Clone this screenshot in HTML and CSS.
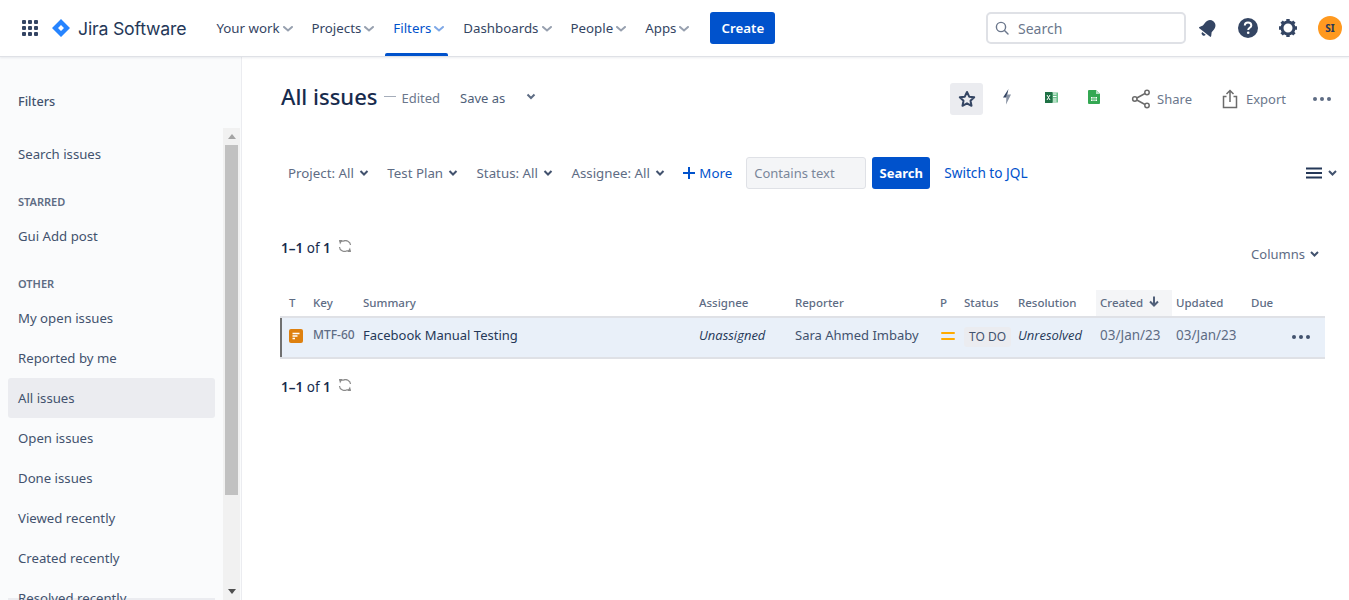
FILE: index.html
```html
<!DOCTYPE html>
<html lang="en">
<head>
<meta charset="utf-8">
<title>All issues</title>
<link rel="stylesheet" href="styles.css">
</head>
<body>
<header class="topbar">
  <svg class="apps" width="16" height="16" viewBox="0 0 16 16"><g fill="#344563"><rect x="0" y="0" width="4" height="4" rx="1"/><rect x="6" y="0" width="4" height="4" rx="1"/><rect x="12" y="0" width="4" height="4" rx="1"/><rect x="0" y="6" width="4" height="4" rx="1"/><rect x="6" y="6" width="4" height="4" rx="1"/><rect x="12" y="6" width="4" height="4" rx="1"/><rect x="0" y="12" width="4" height="4" rx="1"/><rect x="6" y="12" width="4" height="4" rx="1"/><rect x="12" y="12" width="4" height="4" rx="1"/></g></svg>
  <a class="logo">
    <svg width="18" height="18" viewBox="0 0 18 18"><path fill="#2684ff" fill-rule="evenodd" d="M9 0l9 9-9 9-9-9zM9 6L6 9l3 3 3-3z"/></svg>
    <span class="logo-text">Jira Software</span>
  </a>
  <nav class="nav">
    <a class="nav-item">Your work<svg class="nav-chev" width="10" height="6" viewBox="0 0 10 6"><path d="M1 1l4 3.500L9 1" fill="none" stroke="#97a0af" stroke-width="2" stroke-linecap="round"/></svg></a>
    <a class="nav-item">Projects<svg class="nav-chev" width="10" height="6" viewBox="0 0 10 6"><path d="M1 1l4 3.500L9 1" fill="none" stroke="#97a0af" stroke-width="2" stroke-linecap="round"/></svg></a>
    <a class="nav-item nav-active">Filters<svg class="nav-chev" width="10" height="6" viewBox="0 0 10 6"><path d="M1 1l4 3.500L9 1" fill="none" stroke="#7fa8e6" stroke-width="2" stroke-linecap="round"/></svg></a>
    <a class="nav-item">Dashboards<svg class="nav-chev" width="10" height="6" viewBox="0 0 10 6"><path d="M1 1l4 3.500L9 1" fill="none" stroke="#97a0af" stroke-width="2" stroke-linecap="round"/></svg></a>
    <a class="nav-item">People<svg class="nav-chev" width="10" height="6" viewBox="0 0 10 6"><path d="M1 1l4 3.500L9 1" fill="none" stroke="#97a0af" stroke-width="2" stroke-linecap="round"/></svg></a>
    <a class="nav-item">Apps<svg class="nav-chev" width="10" height="6" viewBox="0 0 10 6"><path d="M1 1l4 3.500L9 1" fill="none" stroke="#97a0af" stroke-width="2" stroke-linecap="round"/></svg></a>
  </nav>
  <button class="create">Create</button>
  <div class="top-right">
    <div class="global-search">
      <svg width="14" height="14" viewBox="0 0 14 14"><circle cx="6" cy="6" r="4.600" fill="none" stroke="#6b778c" stroke-width="1.400"/><path d="M9.500 9.500l3.500 3.500" stroke="#6b778c" stroke-width="1.400" stroke-linecap="round"/></svg>
      <span>Search</span>
    </div>
    <svg class="tb-bell" width="18" height="18" viewBox="0 0 18 18"><g fill="#344563" transform="rotate(38 9 9) translate(-1.300 -1.300) scale(1.150)"><path d="M9 1.500c-3 0-4.800 2.300-4.800 5.200v3.300L2.500 12.800v1h13v-1l-1.700-2.800V6.700C13.800 3.800 12 1.500 9 1.500z"/><path d="M7 14.800h4a2 2 0 0 1-4 0z"/></g></svg>
    <svg class="tb-help" width="22" height="22" viewBox="0 0 22 22"><circle cx="11" cy="11" r="10" fill="#344563"/><path d="M7.800 8.600c0-1.900 1.400-3 3.200-3 1.900 0 3.300 1.100 3.300 2.800 0 2.400-3.100 2.400-3.100 4.600" fill="none" stroke="#fff" stroke-width="2"/><circle cx="11.200" cy="15.800" r="1.300" fill="#fff"/></svg>
    <svg class="tb-gear" width="20" height="20" viewBox="0 0 20 20"><circle cx="10" cy="10" r="6" fill="none" stroke="#344563" stroke-width="3"/><g stroke="#344563" stroke-width="3.400"><path d="M10 1v3M10 16v3M1 10h3M16 10h3M3.600 3.600l2.200 2.200M14.200 14.200l2.200 2.200M3.600 16.400l2.200-2.200M14.200 5.800l2.200-2.200"/></g></svg>
    <div class="avatar">SI</div>
  </div>
</header>

<div class="page">
  <aside class="sidebar">
    <h2 class="side-title">Filters</h2>
    <div class="side-scroll">
      <ul class="side-list">
        <li class="side-item">Search issues</li>
        <li class="side-head">STARRED</li>
        <li class="side-item">Gui Add post</li>
        <li class="side-head">OTHER</li>
        <li class="side-item">My open issues</li>
        <li class="side-item">Reported by me</li>
        <li class="side-item side-current">All issues</li>
        <li class="side-item">Open issues</li>
        <li class="side-item">Done issues</li>
        <li class="side-item">Viewed recently</li>
        <li class="side-item">Created recently</li>
        <li class="side-item side-last">Resolved recently</li>
      </ul>
      <div class="scrollbar">
        <div class="sb-arrow"><svg width="8" height="5" viewBox="0 0 8 5"><path d="M4 0l4 5H0z" fill="#a3a3a3"/></svg></div>
        <div class="sb-thumb"></div>
        <div class="sb-track"></div>
        <div class="sb-arrow"><svg width="8" height="5" viewBox="0 0 8 5"><path d="M0 0h8L4 5z" fill="#505050"/></svg></div>
      </div>
    </div>
  </aside>

  <main class="main">
    <div class="title-row">
      <h1 class="title">All issues</h1>
      <span class="dash"></span>
      <span class="edited">Edited</span>
      <span class="save-as">Save as</span>
      <svg class="save-chev" width="10" height="7" viewBox="0 0 10 7"><path d="M1.500 1.500L5 5l3.500-3.500" fill="none" stroke="#5e6c84" stroke-width="2"/></svg>
      <div class="ops">
        <button class="star-btn"><svg width="18" height="18" viewBox="0 0 18 18"><path d="M9 2l2.200 4.700 5 .6-3.700 3.500 1 5L9 13.300 4.500 15.800l1-5L1.800 7.300l5-.6z" fill="none" stroke="#344563" stroke-width="2" stroke-linejoin="round"/></svg></button>
        <svg class="op-bolt" width="12" height="16" viewBox="0 0 12 16"><path d="M7.500 0L2 8.500h3.500z" fill="#344563"/><path d="M5.500 5.500H10L5 15.500z" fill="#8993a4"/></svg>
        <svg class="op-xls" width="13" height="13" viewBox="0 0 13 13"><rect x="4" y="1.500" width="9" height="10" fill="#6cc08b"/><path d="M8 3h3.500M8 5.500h3.500M8 8h3.500M8 10h3.500" stroke="#fff" stroke-width="1"/><rect x="0" y="1" width="7.500" height="11" fill="#1e7145"/><path d="M2 4l3 5M5 4L2 9" stroke="#fff" stroke-width="1"/></svg>
        <svg class="op-sheet" width="12" height="14" viewBox="0 0 12 14"><path d="M0 1a1 1 0 0 1 1-1h7l4 4v9a1 1 0 0 1-1 1H1a1 1 0 0 1-1-1z" fill="#34a853"/><path d="M8 0l4 4H8z" fill="#b7e1c5"/><path d="M3 7h6v4H3z" fill="#fff"/><path d="M5 7v4M7 7v4M3 9h6" stroke="#34a853" stroke-width=".8"/></svg>
        <a class="op-link op-share"><svg width="20" height="20" viewBox="0 0 20 20"><g fill="none" stroke="#6b6b6b" stroke-width="1.500"><circle cx="3.800" cy="10" r="2.200"/><circle cx="16" cy="3.500" r="2.200"/><circle cx="16" cy="16.500" r="2.200"/><path d="M5.800 9l8.200-4.500M5.800 11l8.200 4.500"/></g></svg>Share</a>
        <a class="op-link op-export"><svg width="16" height="20" viewBox="0 0 16 20"><g fill="none" stroke="#6b6b6b" stroke-width="1.500"><path d="M4.500 7.500H1.500v11h13v-11h-3"/><path d="M8 13V2M4.500 5L8 1.500 11.500 5"/></g></svg>Export</a>
        <svg class="op-more" width="18" height="4" viewBox="0 0 18 4"><g fill="#5e6c84"><circle cx="2" cy="2" r="2"/><circle cx="9" cy="2" r="2"/><circle cx="16" cy="2" r="2"/></g></svg>
      </div>
    </div>

    <div class="filter-row">
      <a class="crit">Project: All<svg class="chev" width="10" height="6" viewBox="0 0 10 6"><path d="M1.500 1L5 4.500 8.500 1" fill="none" stroke="#42526e" stroke-width="2"/></svg></a>
      <a class="crit">Test Plan<svg class="chev" width="10" height="6" viewBox="0 0 10 6"><path d="M1.500 1L5 4.500 8.500 1" fill="none" stroke="#42526e" stroke-width="2"/></svg></a>
      <a class="crit">Status: All<svg class="chev" width="10" height="6" viewBox="0 0 10 6"><path d="M1.500 1L5 4.500 8.500 1" fill="none" stroke="#42526e" stroke-width="2"/></svg></a>
      <a class="crit">Assignee: All<svg class="chev" width="10" height="6" viewBox="0 0 10 6"><path d="M1.500 1L5 4.500 8.500 1" fill="none" stroke="#42526e" stroke-width="2"/></svg></a>
      <a class="more"><svg width="12" height="12" viewBox="0 0 12 12"><path d="M6 0v12M0 6h12" stroke="#0052cc" stroke-width="2"/></svg>More</a>
      <div class="text-filter">Contains text</div>
      <button class="search-btn">Search</button>
      <a class="jql">Switch to JQL</a>
      <div class="layout-switch">
        <svg width="16" height="12" viewBox="0 0 16 12"><path d="M0 1.500h16M0 6h16M0 10.500h16" stroke="#253858" stroke-width="2"/></svg>
        <svg width="9" height="6" viewBox="0 0 9 6"><path d="M1 1l3.500 3.500L8 1" fill="none" stroke="#42526e" stroke-width="2"/></svg>
      </div>
    </div>

    <div class="count-row">
      <span class="count"><b>1–1</b> of <b>1</b></span>
      <svg class="refresh" width="14" height="12" viewBox="0 0 14 12"><g fill="none" stroke="#8a8a8a" stroke-width="1.200"><path d="M12.500 5A5 4.500 0 0 0 5 1.200H1.500"/><path d="M1.500 7A5 4.500 0 0 0 9 10.800h3.500"/></g><path d="M1 0h3.500L2 4.500zM13 12H9.500L12 7.500z" fill="#8a8a8a"/></svg>
      <a class="columns">Columns<svg class="chev" width="9" height="6" viewBox="0 0 9 6"><path d="M1 1l3.500 3.500L8 1" fill="none" stroke="#42526e" stroke-width="2"/></svg></a>
    </div>

    <table class="issues">
      <colgroup>
        <col class="c-t"><col class="c-key"><col class="c-sum"><col class="c-asg"><col class="c-rep"><col class="c-p"><col class="c-st"><col class="c-res"><col class="c-cr"><col class="c-up"><col class="c-due"><col class="c-act">
      </colgroup>
      <thead>
        <tr>
          <th class="th-t">T</th><th>Key</th><th>Summary</th><th>Assignee</th><th>Reporter</th><th>P</th><th>Status</th><th>Resolution</th>
          <th class="th-sorted">Created<svg class="sort" width="10" height="11" viewBox="0 0 10 11"><path d="M5 0.500v9M1 5.500l4 4 4-4" fill="none" stroke="#505f79" stroke-width="2"/></svg></th>
          <th>Updated</th><th>Due</th><th></th>
        </tr>
      </thead>
      <tbody>
        <tr>
          <td class="td-t"><svg class="type" width="14" height="14" viewBox="0 0 14 14"><rect width="14" height="14" rx="2" fill="#de800f"/><path d="M3.500 4.500h7M3.500 7h5M3.500 9.500h2.500" stroke="#fff" stroke-width="1.300"/></svg></td>
          <td class="td-key">MTF-60</td>
          <td class="td-sum">Facebook Manual Testing</td>
          <td class="td-it">Unassigned</td>
          <td class="td-rep">Sara Ahmed Imbaby</td>
          <td><svg class="prio" width="14" height="10" viewBox="0 0 14 10"><path d="M1 2h12M1 8h12" stroke="#ffab00" stroke-width="2" stroke-linecap="round"/></svg></td>
          <td><span class="lozenge">TO DO</span></td>
          <td class="td-it">Unresolved</td>
          <td class="td-date">03/Jan/23</td>
          <td class="td-date">03/Jan/23</td>
          <td></td>
          <td class="td-act"><svg width="18" height="4" viewBox="0 0 18 4"><g fill="#42526e"><circle cx="2" cy="2" r="2"/><circle cx="9" cy="2" r="2"/><circle cx="16" cy="2" r="2"/></g></svg></td>
        </tr>
      </tbody>
    </table>

    <div class="count-row count-bottom">
      <span class="count"><b>1–1</b> of <b>1</b></span>
      <svg class="refresh" width="14" height="12" viewBox="0 0 14 12"><g fill="none" stroke="#8a8a8a" stroke-width="1.200"><path d="M12.500 5A5 4.500 0 0 0 5 1.200H1.500"/><path d="M1.500 7A5 4.500 0 0 0 9 10.800h3.500"/></g><path d="M1 0h3.500L2 4.500zM13 12H9.500L12 7.500z" fill="#8a8a8a"/></svg>
    </div>
  </main>
</div>
</body>
</html>
```

FILE: styles.css
```css
* { box-sizing: border-box; }
html, body { margin: 0; height: 100%; overflow: hidden; }
body {
  font-family: "Noto Sans", "Open Sans", "Liberation Sans", sans-serif;
  font-size: 13px;
  color: #172b4d;
  background: #fff;
}
button { font-family: inherit; border: 0; cursor: pointer; }
ul { list-style: none; margin: 0; padding: 0; }
h1, h2 { margin: 0; font-weight: 400; }

.topbar {
  height: 57px;
  display: flex;
  align-items: center;
  padding-left: 22px;
  background: #fff;
  border-bottom: 1px solid #dfe1e6;
  box-shadow: 0 1px 2px rgba(9, 30, 66, .08);
  position: relative;
}
.logo { display: flex; align-items: center; margin-left: 14px; }
.logo-text { font-family: "Inter", "Noto Sans", sans-serif; font-size: 17.700px; color: #253858; margin-left: 8px; letter-spacing: -.2px; }
.nav { display: flex; height: 56px; margin-left: 22px; gap: 0; }
.nav-item { display: flex; align-items: center; padding: 0 4px 0 8px; margin-right: 7px; color: #344563; font-size: 13.300px; position: relative; }
.nav-chev { margin-left: 3px; margin-top: 2px; }
.nav-active { color: #0052cc; }
.nav-active::after { content: ""; position: absolute; left: 0; right: 0; bottom: 0; height: 3px; background: #0052cc; border-radius: 2px 2px 0 0; }
.create { margin-left: 10px; width: 65px; height: 32px; background: #0052cc; color: #fff; font-size: 13.300px; font-weight: 600; border-radius: 3px; padding: 0; }
.top-right { margin-left: auto; display: flex; align-items: center; padding-right: 7px; }
.global-search { width: 200px; height: 32px; border: 2px solid #dfe1e6; border-radius: 5px; display: flex; align-items: center; padding-left: 7px; color: #6b778c; font-size: 14px; gap: 9px; }
.tb-bell { margin-left: 13px; }
.tb-help { margin-left: 20px; }
.tb-gear { margin-left: 19px; }
.avatar { margin-left: 20px; width: 24px; height: 24px; border-radius: 50%; background: #ff991f; color: #253858; font-size: 10px; font-weight: 700; display: flex; align-items: center; justify-content: center; }

.page { display: flex; height: 543px; }
.sidebar { width: 242px; flex: none; background: #fafbfc; border-right: 1px solid #ebecf0; display: flex; flex-direction: column; overflow: hidden; }
.side-title { font-size: 12.700px; font-weight: 500; color: #42526e; padding: 35px 0 0 18px; line-height: 18px; height: 71px; }
.side-scroll { flex: 1; display: flex; min-height: 0; overflow: hidden; padding-left: 8px; }
.side-list { flex: 1; min-width: 0; padding-top: 6px; margin-right: 8px; }
.side-item { height: 40px; line-height: 40px; padding-left: 10px; border-radius: 3px; color: #42526e; font-size: 13.200px; white-space: nowrap; }
.side-head { height: 42px; padding: 21px 0 0 10px; line-height: 14px; font-size: 11px; font-weight: 600; color: #5e6c84; }
.side-current { background: #ebecf0; }
.side-last { background: linear-gradient(transparent 20px, #ebecf0 20px); }
.scrollbar { width: 17px; margin-right: 1px; background: #f1f1f1; display: flex; flex-direction: column; align-items: center; }
.sb-arrow { height: 17px; flex: none; display: flex; align-items: center; justify-content: center; }
.sb-thumb { width: 13px; height: 350px; flex: none; background: #c1c1c1; }
.sb-track { flex: 1; }

.main { flex: 1; min-width: 0; padding: 0 24px 0 39px; }
.title-row { display: flex; align-items: center; height: 84px; padding-bottom: 6px; }
.title { font-size: 22px; font-weight: 500; color: #172b4d; line-height: 30px; }
.dash { width: 12px; height: 1px; background: #a5adba; margin: 0 5px 0 7px; }
.edited { color: #6b778c; font-size: 13px; margin-top: 3px; }
.save-as { color: #505f79; font-size: 13px; margin-left: 20px; margin-top: 3px; }
.save-chev { margin-left: 21px; margin-top: 1px; }
.ops { margin-left: auto; display: flex; align-items: center; margin-right: -6px; margin-top: 6px; }
.star-btn { width: 33px; height: 32px; background: #ebecf0; border-radius: 3px; padding: 0; display: flex; align-items: center; justify-content: center; }
.op-bolt { margin-left: 18px; margin-top: -4px; }
.op-xls { margin-left: 32px; margin-top: -4px; }
.op-sheet { margin-left: 30px; margin-top: -4px; }
.op-link { display: flex; align-items: center; color: #6b778c; font-size: 13px; gap: 6px; }
.op-share { margin-left: 31px; }
.op-export { margin-left: 30px; gap: 8px; }
.op-more { margin-left: 27px; }

.filter-row { display: flex; align-items: center; height: 32px; margin-top: 16px; padding-left: 7px; }
.crit { display: flex; align-items: center; color: #5e6c84; font-size: 13.300px; margin-right: 18.500px; }
.chev { margin-left: 5px; }
.more { display: flex; align-items: center; color: #0052cc; font-size: 13.300px; gap: 4px; margin-right: 14px; }
.text-filter { width: 120px; height: 32px; background: #f4f5f7; border: 1px solid #dfe1e6; border-radius: 3px; color: #7a869a; font-size: 13px; line-height: 30px; padding-left: 7px; }
.search-btn { width: 58px; height: 32px; margin-left: 6px; background: #0052cc; color: #fff; font-size: 13px; font-weight: 700; border-radius: 3px; padding: 0; }
.jql { margin-left: 14px; color: #0052cc; font-size: 13.650px; margin-top: -2px; }
.layout-switch { margin-left: auto; margin-right: -12px; display: flex; align-items: center; gap: 6px; }

.count-row { display: flex; align-items: center; height: 18px; margin-top: 50px; }
.count { font-size: 13.500px; color: #172b4d; }
.count b { font-weight: 600; }
.refresh { margin-left: 7px; margin-top: -4px; }
.columns { margin-left: auto; margin-right: 6px; display: flex; align-items: center; color: #5e6c84; font-size: 13px; margin-top: 12px; }

.issues { width: 1044px; table-layout: fixed; border-collapse: collapse; margin-top: 33px; margin-left: -1px; }
.c-t { width: 28px; } .c-key { width: 50px; } .c-sum { width: 336px; } .c-asg { width: 96px; }
.c-rep { width: 145px; } .c-p { width: 24px; } .c-st { width: 54px; } .c-res { width: 82px; }
.c-cr { width: 76px; } .c-up { width: 75px; } .c-due { width: 36px; } .c-act { width: 42px; }
.issues th { height: 27px; padding: 0 4px 2px; text-align: left; font-size: 11.500px; font-weight: 500; color: #5e6c84; border-bottom: 2px solid #dfe1e6; white-space: nowrap; }
.issues th.th-t { padding-left: 8px; }
.issues th.th-sorted { background: #f4f5f7; }
.sort { margin-left: 6px; }
.issues td { height: 41px; padding: 0 4px 6px; background: #e9f0f9; border-bottom: 2px solid #dfe1e6; font-size: 13px; white-space: nowrap; color: #172b4d; }
.issues td.td-t { padding-left: 8px; border-left: 2px solid #707070; }
.type { display: block; margin-left: -1px; margin-top: 2px; }
.issues td.td-key { font-size: 12px; color: #5e6c84; font-weight: 500; overflow: hidden; }
.issues td.td-sum { color: #253858; }
.issues td.td-it { font-family: "Open Sans", "Noto Sans", sans-serif; font-style: italic; color: #253858; }
.issues td.td-rep { color: #42526e; }
.issues td.td-date { color: #5e6c84; font-size: 13.500px; }
.prio { display: block; margin-left: 1px; margin-top: 2px; }
.lozenge { display: inline-block; margin-top: 4px; background: #ebecf0; color: #42526e; font-size: 12px; font-weight: 400; border-radius: 3px; padding: 2px 5px; line-height: 16px; }
.td-act svg { display: block; margin-left: 5px; margin-top: 4px; }
.count-bottom { margin-top: 19px; }
```
